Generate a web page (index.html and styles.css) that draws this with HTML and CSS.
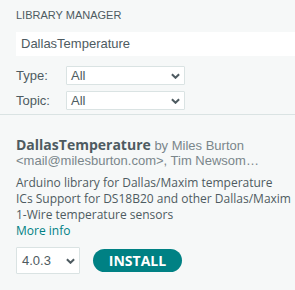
FILE: index.html
```html
<!DOCTYPE html>
<html>
<head>
<meta charset="utf-8">
<link rel="stylesheet" href="styles.css">
</head>
<body>
<div class="panel">
  <div class="head">
    <div class="head-title">Library Manager</div>
    <div class="search">DallasTemperature</div>
    <div class="filters">
      <div class="filter-row">
        <span class="filter-label">Type:</span>
        <div class="select"><span>All</span><svg class="chev" viewBox="0 0 10 6"><path d="M1 1L5 5L9 1"/></svg></div>
      </div>
      <div class="filter-row">
        <span class="filter-label">Topic:</span>
        <div class="select"><span>All</span><svg class="chev" viewBox="0 0 10 6"><path d="M1 1L5 5L9 1"/></svg></div>
      </div>
    </div>
  </div>
  <div class="item">
    <div class="item-header"><span class="item-name">DallasTemperature</span> <span class="item-author">by Miles Burton &lt;mail@milesburton.com&gt;, Tim Newsom…</span></div>
    <div class="item-desc">Arduino library for Dallas/Maxim temperature ICs Support for DS18B20 and other Dallas/Maxim 1-Wire temperature sensors</div>
    <a class="more-info" href="#">More info</a>
    <div class="item-footer">
      <div class="select version"><span>4.0.3</span><svg class="chev" viewBox="0 0 10 6"><path d="M1 1L5 5L9 1"/></svg></div>
      <button class="install">INSTALL</button>
    </div>
  </div>
</div>
</body>
</html>
```
FILE: styles.css
```css
html, body {
  margin: 0;
  padding: 0;
  background: #f6f8f8;
}
body {
  width: 295px;
  height: 290px;
  overflow: hidden;
  color: #4e5b61;
  font-family: "Liberation Sans", Arial, sans-serif;
}
.head {
  padding: 9px 0 0 16px;
  border-bottom: 1px solid #dae3e3;
  padding-bottom: 4px;
}
.head-title {
  font-size: 11px;
  line-height: 13px;
  text-transform: uppercase;
}
.search {
  margin-top: 10px;
  height: 24px;
  line-height: 24px;
  background: #fff;
  font-size: 13px;
  padding-left: 5px;
  color: #4e5b61;
}
.filters {
  margin-top: 10px;
  display: flex;
  flex-direction: column;
  gap: 6px;
}
.filter-row {
  display: flex;
  align-items: center;
  font-size: 13px;
}
.filter-label {
  width: 50px;
}
.select {
  box-sizing: border-box;
  width: 119px;
  height: 19px;
  background: #fff;
  border: 1px solid #dae3e3;
  border-radius: 1px;
  display: flex;
  align-items: center;
  justify-content: space-between;
  padding: 0 4px 0 4px;
  font-size: 13px;
  color: #4e5b61;
}
.chev {
  width: 9px;
  height: 6px;
  fill: none;
  stroke: #4e5b61;
  stroke-width: 2.2;
}
.item {
  padding: 22px 3.5px 0 16px;
}
.item-header {
  font-size: 13px;
  line-height: 15px;
}
.item-name {
  font-family: "Open Sans", sans-serif;
  font-weight: 700;
  font-size: 14px;
  color: #4e5b61;
}
.item-author {
  color: #7a868b;
}
.item-desc {
  margin-top: 7px;
  font-family: "Open Sans", sans-serif;
  font-size: 12px;
  line-height: 16px;
}
.more-info {
  display: block;
  font-family: "Open Sans", sans-serif;
  font-size: 12px;
  line-height: 16px;
  color: #008184;
  text-decoration: none;
}
.item-footer {
  margin-top: 8px;
  display: flex;
  align-items: center;
  gap: 13px;
}
.version {
  width: 64px;
  height: 27px;
  padding: 0 4px 0 5px;
}
.install {
  height: 23px;
  width: 89px;
  border: none;
  border-radius: 12px;
  background: #008184;
  color: #fff;
  font-family: "Open Sans", sans-serif;
  font-weight: 700;
  font-size: 14px;
  padding: 0;
}
```
